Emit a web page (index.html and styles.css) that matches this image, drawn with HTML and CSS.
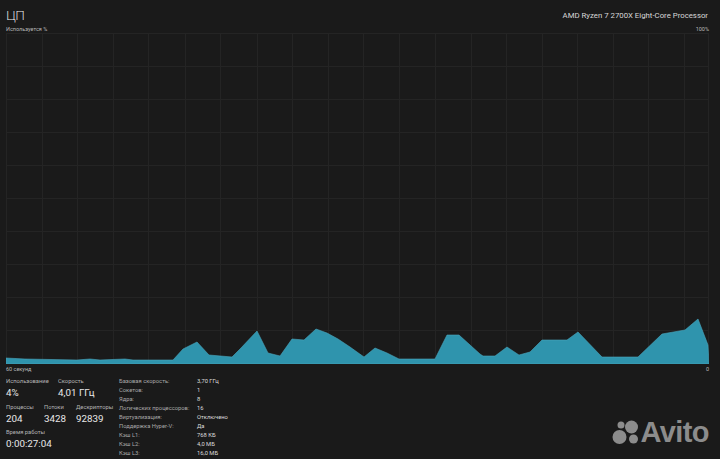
FILE: index.html
```html
<!DOCTYPE html>
<html lang="ru">
<head>
<meta charset="UTF-8" />
<meta name="viewport" content="width=device-width, initial-scale=1" />
<title>ЦП</title>
<link rel="stylesheet" href="styles.css">
</head>

<body>
<div class="page">

  <div class="header">
    <div class="title">ЦП</div>
    <div class="cpu-name">AMD Ryzen 7 2700X Eight-Core Processor</div>
  </div>

  <div class="axis axis-top">
    <span>Используется %</span>
    <span>100%</span>
  </div>

  <svg class="chart" viewBox="0 0 703 331" width="703" height="331">
    <g class="grid">
      <path d="M0 .5H703M0 33.5H703M0 66.5H703M0 99.5H703M0 132.5H703M0 165.5H703M0 198.5H703M0 231.5H703M0 264.5H703M0 297.5H703" />
      <path d="M.5 0V331M36.5 0V331M71.5 0V331M107.5 0V331M142.5 0V331M179.5 0V331M214.5 0V331M251.5 0V331M286.5 0V331M322.5 0V331M357.5 0V331M393.5 0V331M429.5 0V331M465.5 0V331M500.5 0V331M536.5 0V331M571.5 0V331M607.5 0V331M642.5 0V331M678.5 0V331M702.5 0V331" />
    </g>
    <polygon class="load" points="0,331 0,325 19,326 71,327 84,326 94,327 119,326 127,327 167,327 177,316 191,309 203,322 226,324 234,316 251,298 262,320 274,323 286,306 298,307 310,296 321,300 332,306 344,314 358,324 369,315 381,320 393,326 429,326 441,302 453,302 474,321 477,323 489,323 501,314 513,322 524,319 536,307 561,307 572,299 596,324 632,324 656,301 679,297 692,286 702,312 703,331" />
  </svg>

  <div class="axis axis-bottom">
    <span>60 секунд</span>
    <span>0</span>
  </div>

  <div class="stats">
    <div class="live">
      <div class="live-row row-usage">
        <div class="stat"><div class="stat-label">Использование</div><div class="stat-value">4%</div></div>
        <div class="stat"><div class="stat-label">Скорость</div><div class="stat-value">4,01 ГГц</div></div>
      </div>
      <div class="live-row row-counts">
        <div class="stat"><div class="stat-label">Процессы</div><div class="stat-value">204</div></div>
        <div class="stat"><div class="stat-label">Потоки</div><div class="stat-value">3428</div></div>
        <div class="stat"><div class="stat-label">Дескрипторы</div><div class="stat-value">92839</div></div>
      </div>
      <div class="stat"><div class="stat-label">Время работы</div><div class="stat-value">0:00:27:04</div></div>
    </div>

    <div class="specs">
      <span class="spec-label">Базовая скорость:</span><span>3,70 ГГц</span>
      <span class="spec-label">Сокетов:</span><span>1</span>
      <span class="spec-label">Ядра:</span><span>8</span>
      <span class="spec-label">Логических процессоров:</span><span>16</span>
      <span class="spec-label">Виртуализация:</span><span>Отключено</span>
      <span class="spec-label">Поддержка Hyper-V:</span><span>Да</span>
      <span class="spec-label">Кэш L1:</span><span>768 КБ</span>
      <span class="spec-label">Кэш L2:</span><span>4,0 МБ</span>
      <span class="spec-label">Кэш L3:</span><span>16,0 МБ</span>
    </div>
  </div>

  <div class="avito">
    <svg class="avito-mark" viewBox="0 0 28 26" width="28" height="26">
      <circle cx="7.5" cy="18" r="7" />
      <circle cx="19.5" cy="8" r="6.5" />
      <circle cx="9" cy="6" r="3.5" />
      <circle cx="21.5" cy="20" r="4.5" />
    </svg>
    <span class="avito-word">Avito</span>
  </div>

</div>
</body>
</html>
```

FILE: styles.css
```css
body {
  margin: 0;
  background-color: #1a1a1a;
  color: #e6e6e6;
  font-family: Roboto, "Open Sans", sans-serif;
}

.page {
  position: relative;
  width: 720px;
  height: 459px;
  padding: 0 11px 0 6px;
  box-sizing: border-box;
  overflow: hidden;
}

.header {
  display: flex;
  justify-content: space-between;
  align-items: center;
  height: 22px;
  padding-top: 4px;
}

.title {
  font-family: "Open Sans", sans-serif;
  font-size: 13.5px;
  font-weight: 300;
  letter-spacing: -0.5px;
  color: #f2f2f2;
}

.cpu-name {
  font-size: 7.8px;
  margin-right: 1px;
  color: #d8d8d8;
}

.axis {
  display: flex;
  justify-content: space-between;
  font-size: 5.5px;
  color: #b8b8b8;
}

.axis-top {
  height: 7px;
  line-height: 7px;
}

.axis-bottom {
  height: 10px;
  line-height: 10px;
}

.chart {
  display: block;
}

.grid path {
  fill: none;
  stroke: #242424;
  stroke-width: 1;
}

.load {
  fill: #2f94ad;
  stroke: #4aa6bd;
  stroke-width: 0.6;
}

.stats {
  display: flex;
  margin-top: 3px;
}

.live {
  width: 113px;
}

.live-row {
  display: flex;
}

.row-usage {
  gap: 14px;
}

.row-usage .stat:first-child {
  width: 38px;
}

.row-counts .stat:nth-child(1) {
  width: 38px;
}

.row-counts .stat:nth-child(2) {
  width: 32px;
}

.stat {
  white-space: nowrap;
  margin-bottom: 2.5px;
}

.stat-label {
  font-size: 5.8px;
  line-height: 9px;
  color: #b4b4b4;
}

.stat-value {
  font-size: 9.8px;
  line-height: 14px;
  color: #e8e8e8;
}

.specs {
  display: grid;
  grid-template-columns: 78px auto;
  grid-auto-rows: 9px;
  font-size: 5.8px;
  line-height: 9px;
  white-space: nowrap;
  color: #dcdcdc;
}

.spec-label {
  color: #a8a8a8;
}

/* watermark lies over the page corner */
.avito {
  position: absolute;
  right: 11px;
  bottom: 14px;
  display: flex;
  align-items: center;
  gap: 1px;
  color: #8c8c8c;
}

.avito-mark {
  fill: #8c8c8c;
}

.avito-word {
  font-family: "Liberation Sans", Arial, sans-serif;
  font-weight: 700;
  font-size: 29px;
  line-height: 26px;
  letter-spacing: -0.6px;
}
```
